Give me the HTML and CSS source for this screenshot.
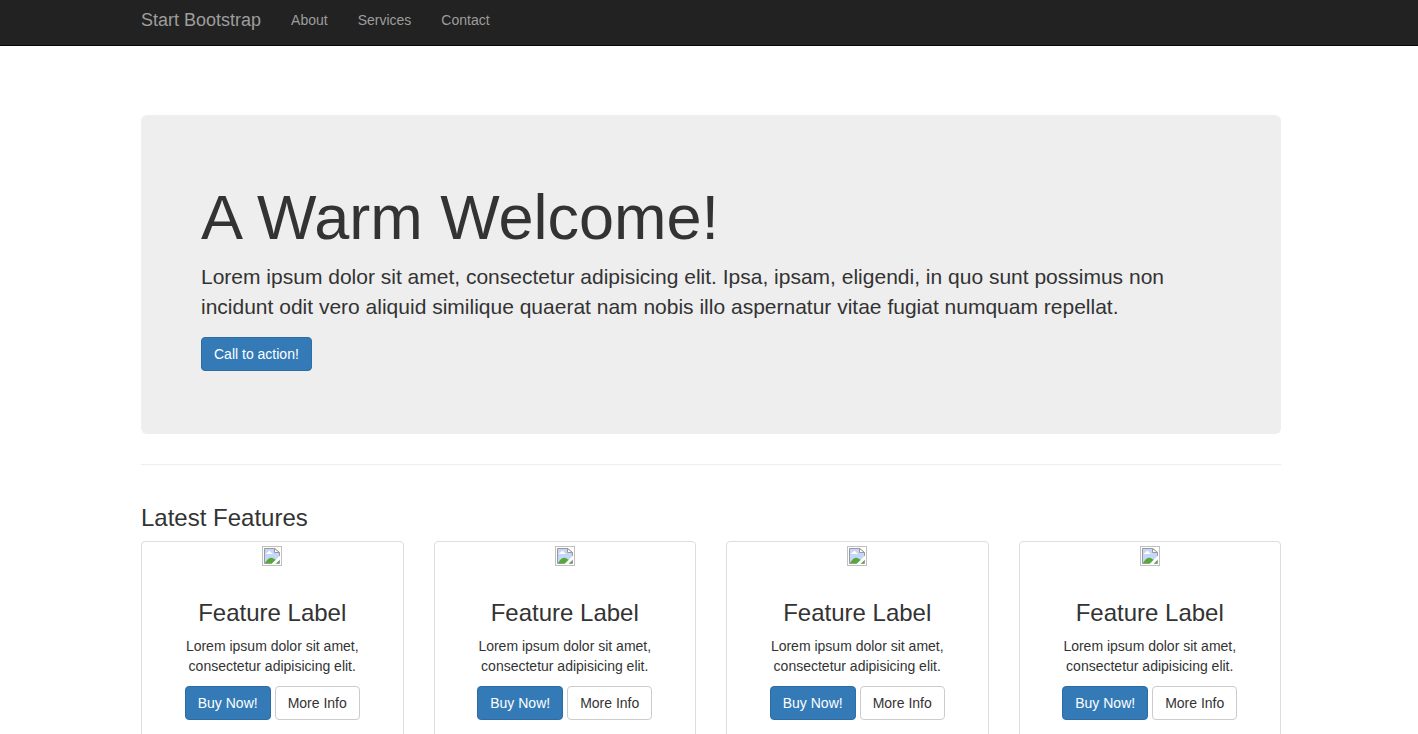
FILE: index.html
```html
<!DOCTYPE html>
<html lang="en">
<head>
<meta charset="utf-8">
<meta name="viewport" content="width=device-width, initial-scale=1">
<title>Start Bootstrap</title>
<link rel="stylesheet" href="styles.css">
</head>
<body>
<svg class="sprite" aria-hidden="true">
  <symbol id="broken" viewBox="0 0 20 20">
    <rect x=".5" y=".5" width="19" height="19" fill="#fff" stroke="#c0c0c0"/>
    <path d="M2.500 2.500h10l5 4v11h-15z" fill="#c5d6f6" stroke="#999"/>
    <path d="M4 8q0-1.500 1.500-1.500Q6 5 7.500 5T9 6.500q1.500 0 1.500 1.500z" fill="#fff"/>
    <path d="M3 17q5-8.500 10-3.500l4 1v2.500z" fill="#55aa37"/>
    <path d="M12.500 2.500v4h5z" fill="#fff" stroke="#999"/>
    <path d="M9.500 18l9-9v4L13.500 18z" fill="#fff"/>
  </symbol>
</svg>
<nav class="navbar">
  <div class="container nav-inner">
    <a class="brand" href="#">Start Bootstrap</a>
    <ul class="nav-list">
      <li><a class="nav-link" href="#">About</a></li>
      <li><a class="nav-link" href="#">Services</a></li>
      <li><a class="nav-link" href="#">Contact</a></li>
    </ul>
  </div>
</nav>
<main class="container content">
  <header class="hero">
    <h1 class="hero-title">A Warm Welcome!</h1>
    <p class="hero-text">Lorem ipsum dolor sit amet, consectetur adipisicing elit. Ipsa, ipsam, eligendi, in quo sunt possimus non incidunt odit vero aliquid similique quaerat nam nobis illo aspernatur vitae fugiat numquam repellat.</p>
    <a class="btn btn-primary" href="#">Call to action!</a>
  </header>
  <hr class="rule">
  <h3 class="section-title">Latest Features</h3>
  <div class="features">
    <article class="card">
      <svg class="thumb" aria-hidden="true"><use href="#broken"/></svg>
      <div class="caption">
        <h3 class="card-title">Feature Label</h3>
        <p class="card-text">Lorem ipsum dolor sit amet, consectetur adipisicing elit.</p>
        <div class="actions"><a class="btn btn-primary" href="#">Buy Now!</a><a class="btn btn-default" href="#">More Info</a></div>
      </div>
    </article>
    <article class="card">
      <svg class="thumb" aria-hidden="true"><use href="#broken"/></svg>
      <div class="caption">
        <h3 class="card-title">Feature Label</h3>
        <p class="card-text">Lorem ipsum dolor sit amet, consectetur adipisicing elit.</p>
        <div class="actions"><a class="btn btn-primary" href="#">Buy Now!</a><a class="btn btn-default" href="#">More Info</a></div>
      </div>
    </article>
    <article class="card">
      <svg class="thumb" aria-hidden="true"><use href="#broken"/></svg>
      <div class="caption">
        <h3 class="card-title">Feature Label</h3>
        <p class="card-text">Lorem ipsum dolor sit amet, consectetur adipisicing elit.</p>
        <div class="actions"><a class="btn btn-primary" href="#">Buy Now!</a><a class="btn btn-default" href="#">More Info</a></div>
      </div>
    </article>
    <article class="card">
      <svg class="thumb" aria-hidden="true"><use href="#broken"/></svg>
      <div class="caption">
        <h3 class="card-title">Feature Label</h3>
        <p class="card-text">Lorem ipsum dolor sit amet, consectetur adipisicing elit.</p>
        <div class="actions"><a class="btn btn-primary" href="#">Buy Now!</a><a class="btn btn-default" href="#">More Info</a></div>
      </div>
    </article>
  </div>
</main>
</body>
</html>
```
FILE: styles.css
```css
* { box-sizing: border-box; }
html { scrollbar-width: none; }
body {
  margin: 0;
  background: #fff;
  color: #333;
  font: 14px/20px "Liberation Sans", Arial, sans-serif;
}
h1, h3, p, ul { margin: 0; padding: 0; font-weight: 400; }
a { text-decoration: none; }
.sprite { display: none; }
.container {
  width: 100%;
  max-width: 1170px;
  margin: 0 auto;
  padding: 0 13px 0 17px;
}
.navbar {
  background: #222;
  border-bottom: 1px solid #080808;
}
.nav-inner { display: flex; align-items: flex-start; height: 45px; }
.brand { padding: 10px 15px 10px 0; color: #9d9d9d; font-size: 18px; }
.nav-list { display: flex; list-style: none; }
.nav-link { display: block; padding: 10px 15px; color: #9d9d9d; }
.content { padding-top: 69px; padding-bottom: 20px; }
.hero {
  padding: 68px 60px 63px;
  border-radius: 6px;
  background: #eee;
}
.hero-title { margin-bottom: 10px; font-size: 63px; line-height: 69px; }
.hero-text { margin-bottom: 15px; font-size: 21px; line-height: 30px; }
.btn {
  display: inline-block;
  padding: 6px 12px;
  border: 1px solid #ccc;
  border-radius: 4px;
  text-align: center;
  white-space: nowrap;
}
.btn-primary { border-color: #2e6da4; background: #337ab7; color: #fff; }
.btn-default { background: #fff; color: #333; }
.rule { margin: 30px 0 40px; border: 0; border-top: 1px solid #eee; }
.section-title { margin-bottom: 10px; font-size: 24px; line-height: 26px; }
.features {
  display: grid;
  grid-template-columns: repeat(4, 1fr);
  gap: 30px;
}
.card {
  padding: 4px;
  border: 1px solid #ddd;
  border-radius: 4px;
  text-align: center;
}
.thumb { display: block; width: 20px; height: 20px; margin: 0 auto; }
.caption { padding: 34px 9px 9px; }
.card-title { margin-bottom: 10px; font-size: 24px; line-height: 26px; }
.card-text { margin-bottom: 10px; }
.actions { display: flex; justify-content: center; gap: 4px; margin-bottom: 10px; }
@media (max-width: 991px) {
  .features { grid-template-columns: repeat(2, 1fr); }
}
```
